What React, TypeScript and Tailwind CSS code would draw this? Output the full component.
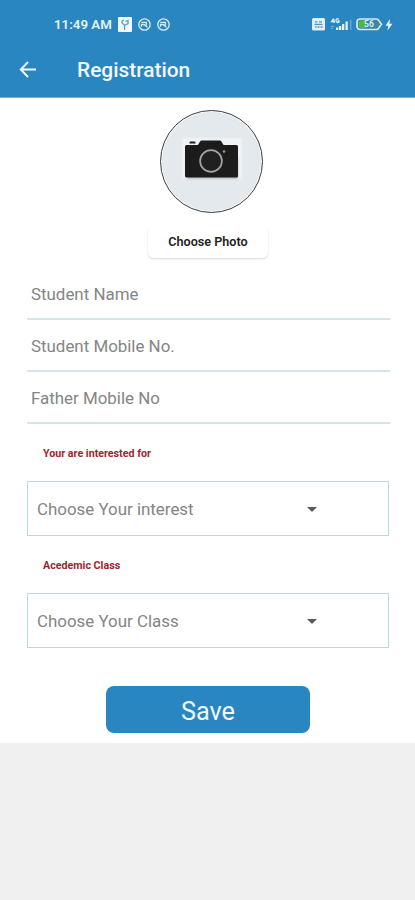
import { useState } from 'react';

const fields = ['Student Name', 'Student Mobile No.', 'Father Mobile No'];

function SyncIcon() {
  return (
    <svg width="13" height="13" viewBox="0 0 13 13" fill="none" stroke="#d9ecf8">
      <circle cx="6.5" cy="6.5" r="5.7" strokeWidth="1.3" />
      <path d="M3.300 4.300H8.300V7.500M3.500 8.800V6.500H6L9.500 9.200" strokeWidth="1.300" />
    </svg>
  );
}

function StatusBar() {
  return (
    <div className="flex h-[49px] items-center pl-[54px] text-[#e4f2fb]">
      <span className="w-[64px] whitespace-nowrap text-[13.3px] font-semibold leading-none">11:49 AM</span>
      <svg width="14" height="15" viewBox="0 0 14 15">
        <rect width="14" height="15" rx="1" fill="#eef8fd" />
        <path d="M6.500 13V8L4 6V4L6 3M6.500 8.500L10 6.500V3.500L7.500 4.500" fill="none" stroke="#5f9cc4" strokeWidth="1.300" />
      </svg>
      <div className="ml-[6px] flex gap-[6px]">
        <SyncIcon />
        <SyncIcon />
      </div>
      <div className="ml-auto mr-[22px] flex items-center">
        <svg width="13" height="13" viewBox="0 0 13 13">
          <rect width="13" height="12.500" rx="1.500" fill="#e0f0f9" />
          <path d="M3 3.800h2.500M7 3.800h3M2.500 6.300h8M3 9h1.500M5.500 9h2M8.500 9h2" stroke="#5b93b8" strokeWidth="1.300" />
        </svg>
        <svg className="ml-[5px]" width="22" height="13" viewBox="0 0 22 13">
          <path d="M3.500 0.500L1.500 3.500h3.500M4 1v4M8.800 1.300C7 0 6 1.500 6 2.500c0 2 2 2.500 3 1.500V3H7.500" fill="none" stroke="#d9ecf8" strokeWidth="1.300" />
          <path d="M6 9.500h2.300V12H6zM9 8h2.300v4H9zM12 6h2.300v6H12zM15.500 3.500h2.300V12h-2.300z" fill="#e0f0f9" />
          <path d="M20 1.500h1.500V12H20z" fill="#5fa8d3" />
          <path d="M1 8.500h3M1 10.500h2" stroke="#75b3d9" />
        </svg>
        <svg className="ml-[4px]" width="28" height="13" viewBox="0 0 28 13">
          <path d="M4 1h16.500a2.500 2.500 0 0 1 2.200 1.400L25.500 6.250L22.700 10.100A2.500 2.500 0 0 1 20.500 11.500H4a3 3 0 0 1-3-3V4a3 3 0 0 1 3-3z" fill="#3d85ad" stroke="#d7ebe9" strokeWidth="1.700" />
          <path d="M4 2.500h6v7.500H4a1.500 1.500 0 0 1-1.500-1.500V4A1.500 1.500 0 0 1 4 2.500z" fill="#4cb749" />
          <text x="8" y="9.300" fontSize="8.500" fontWeight="700" fill="#d9eee5">56</text>
        </svg>
        <svg className="ml-[1px]" width="8" height="12" viewBox="0 0 8 12">
          <path d="M5 0L0.500 6.800h2.800L2.500 11.500L7.500 4.800H4.500z" fill="#e4f4fc" />
        </svg>
      </div>
    </div>
  );
}

function Camera() {
  return (
    <svg width="64" height="49" viewBox="0 0 64 49">
      <defs>
        <filter id="soft" x="-20%" y="-20%" width="140%" height="140%">
          <feGaussianBlur stdDeviation="1.200" />
        </filter>
      </defs>
      <rect x="2" y="1" width="60" height="41" fill="#f1f3f5" filter="url(#soft)" />
      <path d="M7 20h51v22H7z" fill="#b9bdc1" filter="url(#soft)" />
      <path d="M9.500 5.500a1 1 0 0 1 1-1h4a1 1 0 0 1 1 1V6.500h-6zM6.500 8h11c1.500 0 2-4.500 4-4.500h18.500c2 0 2.500 4.500 4 4.500H56.500a1.500 1.500 0 0 1 1.500 1.500V39a1.500 1.500 0 0 1-1.500 1.500h-50A1.500 1.500 0 0 1 5 39V9.500A1.500 1.500 0 0 1 6.500 8z" fill="#1c1c1d" />
      <circle cx="31" cy="24" r="10.900" fill="#202021" stroke="#a3a3a3" strokeWidth="1.700" />
      <circle cx="44" cy="14.500" r="1.300" fill="#a49a48" />
    </svg>
  );
}

function SelectBox({ label, className }: { label: string; className: string }) {
  return (
    <button
      className={`flex w-[362px] items-center border border-[#b9dade] pl-[9px] pr-[71px] pt-[2px] text-left text-[16.9px] text-[#858585] ${className}`}
    >
      <span className="flex-1 whitespace-nowrap">{label}</span>
      <svg width="10" height="5" viewBox="0 0 10 5">
        <path d="M0 0h10L5 5z" fill="#5b5b5b" />
      </svg>
    </button>
  );
}

export default function App() {
  const [values, setValues] = useState<string[]>(['', '', '']);

  return (
    <div className="min-h-[900px] w-full bg-[#f0f0f0] font-['Roboto',sans-serif]">
      {/* Header */}
      <header className="h-[98px] border-b border-[#76b1d4] bg-[#2986c1]">
        <StatusBar />
        <div className="flex h-[41px] items-center pl-[19px] text-[#f1f9fe]">
          <svg width="18" height="18" viewBox="0 0 18 18" fill="none" stroke="currentColor" strokeWidth="2">
            <path d="M17 8.500H2M9 1L1.800 8.500L9 16" />
          </svg>
          <h1 className="ml-10 pt-px text-[20.9px] font-medium leading-none">Registration</h1>
        </div>
      </header>

      {/* Form */}
      <main className="flex h-[645px] flex-col bg-white px-[27px] pt-3">
        <div className="ml-[133px] flex size-[103px] items-center justify-center rounded-full border border-[#3f3f3f] bg-[#e4e9ee] shadow-[inset_0_0_0_1px_#fafafa]">
          <Camera />
        </div>
        <button className="ml-[121px] mt-[13px] h-[32px] w-[120px] rounded-[6px] bg-white text-[12.6px] font-semibold text-[#222222] shadow-[0_1px_2px_rgba(0,0,0,0.15)]">
          Choose Photo
        </button>

        <div className="mt-[10px]">
          {fields.map((field, i) => (
            <input
              key={field}
              value={values[i]}
              placeholder={field}
              onChange={(e) => setValues(values.map((v, j) => (j === i ? e.target.value : v)))}
              className="block h-[52px] w-[363px] border-b-2 border-[#d0e6e8] pl-1 pt-[2px] text-[16.9px] text-[#333333] outline-none placeholder:text-[#858585]"
            />
          ))}
        </div>

        <label className="mt-[23px] h-[14px] pl-4 text-[10.7px] font-bold leading-[14px] text-[#9c2630]">
          Your are interested for
        </label>
        <SelectBox label="Choose Your interest" className="mt-[20px] h-[55px]" />

        <label className="mt-[23px] h-[14px] pl-4 text-[10.7px] font-bold leading-[14px] text-[#9c2630]">
          Acedemic Class
        </label>
        <SelectBox label="Choose Your Class" className="mt-[20px] h-[55px]" />

        <button className="ml-[79px] mt-[38px] h-[47px] w-[204px] rounded-[8px] bg-[#2986c1] pt-[4px] text-[25.3px] leading-none text-[#eff8fe]">
          Save
        </button>
      </main>
    </div>
  );
}
